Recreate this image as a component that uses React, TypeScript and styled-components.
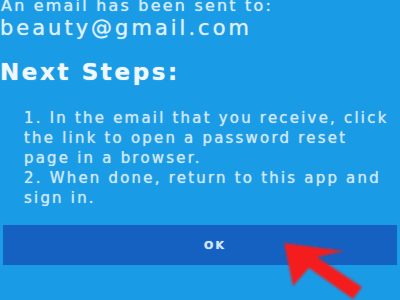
import React from 'react';
import styled, { createGlobalStyle } from 'styled-components';

const GlobalStyle = createGlobalStyle`
  html, body {
    margin: 0;
    padding: 0;
    background: #1a9be6;
  }
  body {
    font-family: 'DejaVu Sans', 'Liberation Sans', sans-serif;
    overflow: hidden;
  }
`;

const Screen = styled.div`
  position: relative;
  width: 400px;
  height: 300px;
  overflow: hidden;
  background: #1a9be6;
  display: flex;
  flex-direction: column;
  text-shadow: 0 0 1px rgba(225, 242, 252, 0.8);
`;

const SentLabel = styled.div`
  margin-top: -4px;
  padding-left: 1px;
  font-size: 16px;
  line-height: 19px;
  letter-spacing: 2.2px;
  color: #d4ecfa;
  white-space: nowrap;
`;

const EmailAddress = styled.div`
  font-size: 21px;
  line-height: 26px;
  letter-spacing: 3px;
  color: #dcf0fb;
  white-space: nowrap;
`;

const Heading = styled.h2`
  margin: 16px 0 0;
  font-size: 23px;
  line-height: 30px;
  font-weight: bold;
  letter-spacing: 2.6px;
  color: #eef8fe;
`;

const Steps = styled.div`
  margin-top: 21px;
  padding: 0 4px 0 24px;
  font-size: 15px;
  line-height: 20px;
  letter-spacing: 2.2px;
  color: #cfe8f8;
`;

const Step = styled.p`
  margin: 0;
`;

const OkBar = styled.button`
  margin: 17px 3px 0;
  height: 40px;
  border: none;
  padding: 0 0 0 30px;
  background: #1561c2;
  color: #d6e6f6;
  font-family: 'DejaVu Sans', 'Liberation Sans', sans-serif;
  font-size: 11px;
  font-weight: bold;
  letter-spacing: 2px;
  text-shadow: 0 0 1px rgba(214, 230, 246, 0.7);
  cursor: pointer;
`;

const ArrowMark = styled.svg`
  position: absolute;
  left: 0;
  top: 0;
  pointer-events: none;
`;

const PointerArrow = () => (
  <ArrowMark width={400} height={300} viewBox="0 0 400 300">
    <defs>
      <filter id="soft" x="-10%" y="-10%" width="120%" height="120%">
        <feGaussianBlur stdDeviation="0.8" />
      </filter>
    </defs>
    <polygon
      points="284,243 344,251 317,257 362,287 353,299 309,268 293,286"
      fill="#f41e1a"
      filter="url(#soft)"
    />
  </ArrowMark>
);

export default function App() {
  return (
    <Screen>
      <GlobalStyle />
      <SentLabel>An email has been sent to:</SentLabel>
      <EmailAddress>beauty@gmail.com</EmailAddress>
      <Heading>Next Steps:</Heading>
      <Steps>
        <Step>1. In the email that you receive, click the link to open a password reset page in a browser.</Step>
        <Step>2. When done, return to this app and sign in.</Step>
      </Steps>
      <OkBar>OK</OkBar>
      <PointerArrow />
    </Screen>
  );
}
